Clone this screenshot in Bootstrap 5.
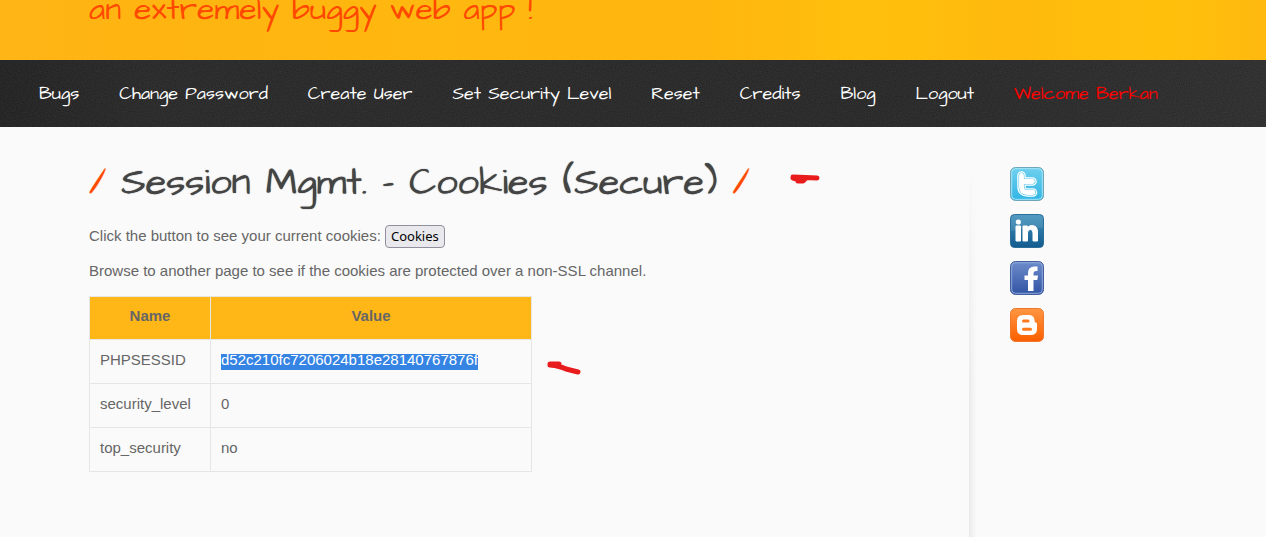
<!DOCTYPE html>
<html lang="en">
<head>
<meta charset="utf-8">
<meta name="viewport" content="width=device-width, initial-scale=1">
<title>Session Mgmt. - Cookies (Secure)</title>
<link href="https://cdn.jsdelivr.net/npm/bootstrap@5.3.0/dist/css/bootstrap.min.css" rel="stylesheet">
<style>
  :root { --hand: "Architects Daughter", "DejaVu Sans", sans-serif; }
  body { background: #fafafa; color: #666; font: 15px/20px "Liberation Sans", Arial, sans-serif; }
  .masthead {
    height: 60px; overflow: hidden; padding-left: 89px;
    background: linear-gradient(90deg, #ffb516 0, #ffb411 12%, #ffb80f 35%, #ffb60f 55%, #ffbf0c 68%, #ffba0d 80%, #ffc00b 92%, #ffb90f 100%);
  }
  .tagline { color: #ff4800; font: 400 32px/40px var(--hand); margin: -10px 0 0; }
  .menu-bar {
    background-color: #2b2b2b; min-height: 67px;
    background-image:
      url("data:image/svg+xml,%3Csvg xmlns='http://www.w3.org/2000/svg' width='240' height='67'%3E%3Cfilter id='n'%3E%3CfeTurbulence type='fractalNoise' baseFrequency='.8' stitchTiles='stitch'/%3E%3CfeColorMatrix values='0 0 0 0 .5 0 0 0 0 .5 0 0 0 0 .5 .4 0 0 0 -.1'/%3E%3C/filter%3E%3Crect width='240' height='67' filter='url(%23n)' opacity='.4'/%3E%3C/svg%3E"),
      linear-gradient(90deg, #202020 0, #272727 12%, #262626 70%, #2c2c2c 100%);
  }
  .menu-bar .nav { gap: 40px; padding-left: 39px; }
  .menu-bar .nav-link { color: #fff; font: 400 18px/24px var(--hand); padding: 0; }
  .menu-bar .nav-link.user { color: #f00; }
  .content { padding: 34px 24px 24px 89px; }
  .page-title { color: #444; font: 400 38px/44px var(--hand); margin: 0; column-gap: 15px; text-shadow: 0 0 1px currentColor; }
  .page-title i { color: #ff4800; font-style: normal; }
  .stroke { fill: none; stroke: #e81c1c; stroke-linecap: round; stroke-linejoin: round; }
  .title-mark { margin-left: 40px; }
  .cookie-form { margin: 20px 0 13px; }
  .btn-plain {
    background: #e9e9ed; border: 1px solid #8f8f9d; border-radius: 4px; color: #000;
    font: 13px/17px "Noto Sans", sans-serif; padding: 2px 5px;
  }
  .cookie-table { width: 443px; margin: 15px 0 0; color: #666; border-color: #e6e6e6; --bs-table-bg: transparent; }
  .cookie-table > :not(caption) > * > * { padding: 10px 10px 13px; color: #666; }
  .cookie-table > thead > tr > th { background: #ffb717; text-align: center; padding-top: 9px; }
  .name-col { width: 121px; }
  .selected { background: linear-gradient(transparent 3px, #3584e4 3px); color: #fff; padding-bottom: 2px; }
  .table-mark { margin: 79px 0 0 15px; }
  .side { width: 297px; padding: 40px 0 0 41px; position: relative; }
  .side::before {
    content: ""; position: absolute; left: 0; top: 0; bottom: 0; width: 8px;
    background: linear-gradient(#fafafa 30px, transparent 270px), linear-gradient(90deg, #e9e9e9, #f3f3f3 50%, #fafafa);
  }
  .side a, .side svg { display: block; }
  .social { row-gap: 13px; }
  .page-body { min-height: calc(100vh - 127px); }
</style>
</head>
<body>
<header class="masthead"><h2 class="tagline">an extremely buggy web app !</h2></header>
<nav class="menu-bar d-flex align-items-center" aria-label="Main">
  <ul class="nav">
    <li><a class="nav-link" href="#">Bugs</a></li>
    <li><a class="nav-link" href="#">Change Password</a></li>
    <li><a class="nav-link" href="#">Create User</a></li>
    <li><a class="nav-link" href="#">Set Security Level</a></li>
    <li><a class="nav-link" href="#">Reset</a></li>
    <li><a class="nav-link" href="#">Credits</a></li>
    <li><a class="nav-link" href="#">Blog</a></li>
    <li><a class="nav-link" href="#">Logout</a></li>
    <li><a class="nav-link user" href="#">Welcome Berkan</a></li>
  </ul>
</nav>
<div class="page-body d-flex">
  <main class="content flex-grow-1">
    <div class="d-flex align-items-center">
      <h1 class="page-title d-flex"><i>/</i><span>Session Mgmt. - Cookies (Secure)</span><i>/</i></h1>
      <svg class="title-mark" width="32" height="22" aria-hidden="true"><path class="stroke" stroke-width="5" d="M3 5 27 6M3 6l7 2M8 9h5l2-2"/></svg>
    </div>
    <form class="cookie-form" onsubmit="return false">Click the button to see your current cookies: <button class="btn-plain" type="submit">Cookies</button></form>
    <p class="m-0">Browse to another page to see if the cookies are protected over a non-SSL channel.</p>
    <div class="d-flex align-items-start">
      <table class="table table-bordered cookie-table">
        <thead><tr><th class="name-col" scope="col">Name</th><th scope="col">Value</th></tr></thead>
        <tbody>
          <tr><td>PHPSESSID</td><td><span class="selected">d52c210fc7206024b18e28140767876f</span></td></tr>
          <tr><td>security_level</td><td>0</td></tr>
          <tr><td>top_security</td><td>no</td></tr>
        </tbody>
      </table>
      <svg class="table-mark" width="36" height="16" aria-hidden="true"><path class="stroke" stroke-width="5" d="M3 4h9M3 5q10 1 16 4l12 3"/></svg>
    </div>
  </main>
  <aside class="side flex-shrink-0">
    <div class="d-grid social">
      <a href="#" aria-label="Twitter"><svg width="34" height="34" viewBox="0 0 34 34">
        <defs>
          <linearGradient id="tw" x2="0" y2="1"><stop stop-color="#6fd0ee"/><stop offset="1" stop-color="#31b5e4"/></linearGradient>
          <linearGradient id="li" x2="0" y2="1"><stop stop-color="#4090bb"/><stop offset="1" stop-color="#135b8e"/></linearGradient>
          <linearGradient id="fb" x2="0" y2="1"><stop stop-color="#6d8ccb"/><stop offset="1" stop-color="#3154a4"/></linearGradient>
          <linearGradient id="bl" x2="0" y2="1"><stop stop-color="#ff9642"/><stop offset="1" stop-color="#fa5f00"/></linearGradient>
        </defs>
        <rect x=".5" y=".5" width="33" height="33" rx="5" fill="url(#tw)" stroke="#6fa5b8"/>
        <rect x="1.7" y="1.7" width="30.6" height="30.6" rx="4" fill="none" stroke="#a4e5f8"/>
        <g fill="none" stroke-linecap="round" stroke-linejoin="round">
          <path d="M11.500 8.500v11q0 6 6 6H23M12 14.500h10.500" stroke="#fff" stroke-width="8.500"/>
          <path d="M11.500 8.500v11q0 6 6 6H23M12 14.500h10.500" stroke="#5cc8eb" stroke-width="6"/>
          <path d="M11.500 8.500v11q0 6 6 6H23M12 14.500h10.500" stroke="#fff" stroke-width="4.800"/>
        </g>
      </svg></a>
      <a href="#" aria-label="LinkedIn"><svg width="34" height="34" viewBox="0 0 34 34">
        <rect x=".5" y=".5" width="33" height="33" rx="4" fill="url(#li)" stroke="#2b6e98"/>
        <path d="M1 17V5q0-4 4-4h24q4 0 4 4v9q-15-1-32 3z" fill="#fff" opacity=".1"/>
        <path d="M6 12h4.500v15H6zM13 12h4.300v2q1.500-2.400 4.700-2.400 5.500 0 5.500 6.400v9H23v-8q0-3.500-2.600-3.500-2.900 0-2.900 3.500v8H13z" fill="#fff" stroke="#fff"/><circle cx="8.300" cy="8" r="2.600" fill="#fff"/>
      </svg></a>
      <a href="#" aria-label="Facebook"><svg width="34" height="34" viewBox="0 0 34 34">
        <rect x=".5" y=".5" width="33" height="33" rx="5" fill="url(#fb)" stroke="#415f9f"/>
        <rect x="1.700" y="1.700" width="30.600" height="30.600" rx="4" fill="none" stroke="#8fa8da"/>
        <path d="M18 30V19h-3.500v-4.500H18V12q0-6.500 6.500-6.500h3V10H26q-2.500 0-2.500 2.500v2h4.500l-.7 4.500h-3.800v11z" fill="#fff"/>
      </svg></a>
      <a href="#" aria-label="Blogger"><svg width="34" height="34" viewBox="0 0 34 34">
        <rect x=".5" y=".5" width="33" height="33" rx="5" fill="url(#bl)" stroke="#ee772b"/>
        <path d="M13 7h5.500q6 0 6 5.500 0 2 1.300 2t1.200 1.700V21q0 6-6.500 6H13q-6 0-6-6v-8q0-6 6-6z" fill="#fff"/>
        <path d="M13.500 13h4.500M13.500 21.300h7" stroke="#ff7a1c" stroke-width="3" stroke-linecap="round"/>
      </svg></a>
    </div>
  </aside>
</div>
<script src="https://cdn.jsdelivr.net/npm/bootstrap@5.3.0/dist/js/bootstrap.bundle.min.js"></script>
</body>
</html>
